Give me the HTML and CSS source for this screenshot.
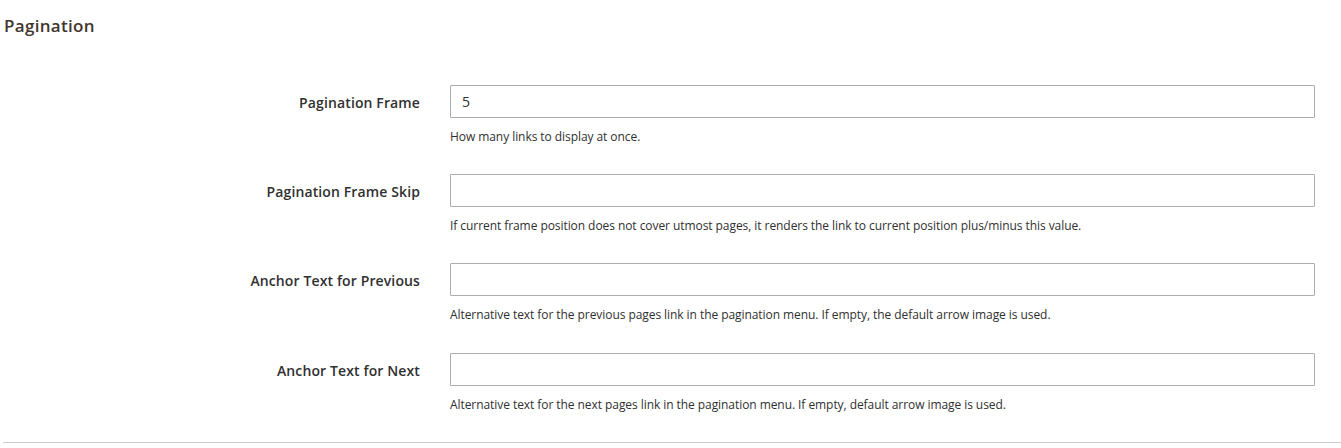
FILE: index.html
```html
<!DOCTYPE html>
<html>
<head>
<meta charset="utf-8">
<link rel="stylesheet" href="styles.css">
</head>
<body>
<div class="section">
  <h2 class="legend">Pagination</h2>
  <div class="fields">
    <div class="row">
      <label class="label">Pagination Frame</label>
      <div class="control">
        <input class="input" type="text" value="5">
        <p class="note">How many links to display at once.</p>
      </div>
    </div>
    <div class="row">
      <label class="label">Pagination Frame Skip</label>
      <div class="control">
        <input class="input" type="text" value="">
        <p class="note">If current frame position does not cover utmost pages, it renders the link to current position plus/minus this value.</p>
      </div>
    </div>
    <div class="row">
      <label class="label">Anchor Text for Previous</label>
      <div class="control">
        <input class="input" type="text" value="">
        <p class="note">Alternative text for the previous pages link in the pagination menu. If empty, the default arrow image is used.</p>
      </div>
    </div>
    <div class="row row-last">
      <label class="label">Anchor Text for Next</label>
      <div class="control">
        <input class="input" type="text" value="">
        <p class="note">Alternative text for the next pages link in the pagination menu. If empty, default arrow image is used.</p>
      </div>
    </div>
  </div>
  <div class="divider"></div>
</div>
</body>
</html>
```
FILE: styles.css
```css
html, body {
  margin: 0;
  padding: 0;
  background: #fff;
}
body {
  font-family: "Open Sans", "Liberation Sans", sans-serif;
  color: #303030;
}
.section {
  padding: 0 0 0 3px;
}
.legend {
  margin: 0;
  padding: 14px 0 0 1px;
  font-size: 17px;
  line-height: 24px;
  font-weight: 600;
  letter-spacing: 0.3px;
  color: #41362f;
}
.fields {
  display: flex;
  flex-direction: column;
  gap: 29px;
  padding-top: 47px;
}
.row {
  display: flex;
  align-items: flex-start;
}
.row-last {
  margin-top: 1px;
}
.label {
  width: 417px;
  flex: none;
  text-align: right;
  font-size: 14px;
  font-weight: 600;
  line-height: 20px;
  letter-spacing: 0.12px;
  padding-top: 8px;
  color: #303030;
}
.control {
  margin-left: 30px;
  width: 865px;
  flex: none;
}
.input {
  display: block;
  box-sizing: border-box;
  width: 100%;
  height: 33px;
  margin: 0;
  border: 1px solid #adadad;
  border-radius: 1px;
  padding: 0 11px;
  font-family: "Open Sans", "Liberation Sans", sans-serif;
  font-size: 14px;
  color: #303030;
  background: #fff;
  outline: none;
}
.note {
  margin: 10px 0 0;
  font-size: 12px;
  line-height: 17px;
  letter-spacing: -0.065px;
  color: #303030;
}
.divider {
  margin-top: 29px;
  height: 1px;
  background: #cccccc;
}
```
